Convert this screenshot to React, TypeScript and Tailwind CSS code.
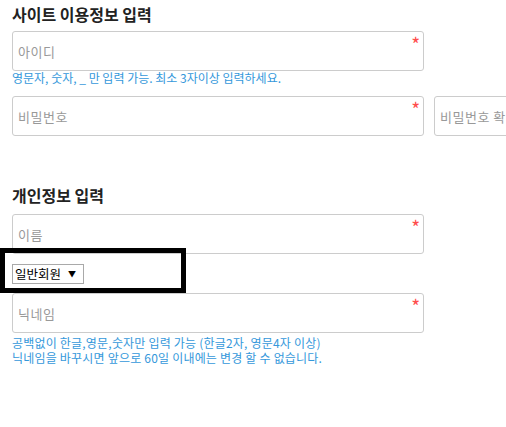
import React from 'react';

const font = { fontFamily: '"Noto Sans CJK KR", "Noto Sans", sans-serif' };

const Field = ({ placeholder, required = true }: { placeholder: string; required?: boolean }) => (
  <div className="relative h-10 w-[412px] shrink-0 rounded-[3px] border border-[#cccccc] bg-white">
    <input
      placeholder={placeholder}
      className="h-full w-full rounded-[3px] bg-transparent pl-[5px] text-[13px] tracking-[0.5px] text-[#333] outline-none placeholder:text-[#999]"
    />
    {required && (
      <span className="absolute right-[3px] top-[2px] text-[19px] leading-none text-[#ff4d4d]">*</span>
    )}
  </div>
);

export default function App() {
  return (
    <div className="relative h-[427px] w-full overflow-hidden bg-white px-3" style={font}>
      <h2 className="h-[28px] text-[16px] font-bold leading-[28px] text-[#222]">사이트 이용정보 입력</h2>
      <div className="mt-[3px]">
        <Field placeholder="아이디" />
      </div>
      <p className="text-[12px] leading-[14px] text-[#3498db]">영문자, 숫자, _ 만 입력 가능. 최소 3자이상 입력하세요.</p>
      <div className="mt-[11px] flex gap-[10px]">
        <Field placeholder="비밀번호" />
        <Field placeholder="비밀번호 확인" required={false} />
      </div>

      <h2 className="mt-[45px] h-[28px] text-[16px] font-bold leading-[28px] text-[#222]">개인정보 입력</h2>
      <div className="mt-[5px]">
        <Field placeholder="이름" />
      </div>
      <div className="mt-[10px] flex h-5 w-[72px] items-center gap-[7px] border border-[#a9a9a9] bg-white pl-[2px] text-[12.5px] text-black">
        <span>일반회원</span>
        <span className="text-[8px]">▼</span>
      </div>
      <div className="mt-[9px]">
        <Field placeholder="닉네임" />
      </div>
      <div className="mt-[2px] text-[12px] leading-[15px] tracking-[0.2px] text-[#3498db]">
        <p>공백없이 한글,영문,숫자만 입력 가능 (한글2자, 영문4자 이상)</p>
        <p>닉네임을 바꾸시면 앞으로 60일 이내에는 변경 할 수 없습니다.</p>
      </div>

      <div className="pointer-events-none absolute left-0 top-[248px] h-[45px] w-[186px] border-[5px] border-black" />
    </div>
  );
}
